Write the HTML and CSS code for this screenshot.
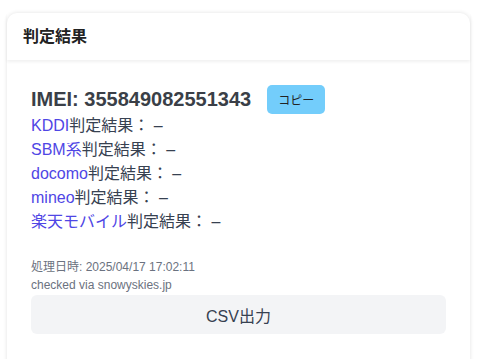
FILE: index.html
```html
<!DOCTYPE html>
<html lang="ja">
<head>
  <meta charset="UTF-8">
  <meta name="viewport" content="width=device-width, initial-scale=1.0">
  <title>判定結果</title>
  <link rel="stylesheet" href="styles.css">
</head>
<body>
  <div class="card">
    <div class="card-header">
      <h2>判定結果</h2>
    </div>

    <div class="card-body">
      <div class="imei-row">
        <span class="imei">IMEI: 355849082551343</span>
        <button class="copy-btn">コピー</button>
      </div>

      <ul class="results">
        <li><span class="carrier">KDDI</span>判定結果： –</li>
        <li><span class="carrier">SBM系</span>判定結果： –</li>
        <li><span class="carrier">docomo</span>判定結果： –</li>
        <li><span class="carrier">mineo</span>判定結果： –</li>
        <li><span class="carrier">楽天モバイル</span>判定結果： –</li>
      </ul>

      <p class="meta">処理日時: 2025/04/17 17:02:11</p>
      <p class="meta">checked via snowyskies.jp</p>

      <button class="csv-btn">CSV出力</button>
    </div>
  </div>
</body>
</html>
```

FILE: styles.css
```css
body {
  margin: 0;
  padding: 13px 7px 0;
  background-color: #fff;
  font-family: "Liberation Sans", Arial, "Noto Sans CJK JP", sans-serif;
  color: #374151;
}

.card {
  background-color: #fff;
  border-radius: 10px;
  box-shadow: 0 0 4px rgba(0, 0, 0, 0.12);
  height: 400px;
}

.card-header {
  height: 47px;
  box-sizing: border-box;
  display: flex;
  align-items: center;
  padding: 0 16px 3px;
  box-shadow: 0 2px 3px rgba(0, 0, 0, 0.06);
  position: relative;
}

h2 {
  margin: 0;
  font-size: 16px;
  font-weight: bold;
  color: #222;
}

.card-body {
  padding: 25px 24px 0;
}

.imei-row {
  display: flex;
  align-items: center;
  gap: 16px;
  height: 29px;
}

.imei {
  font-size: 20px;
  font-weight: bold;
  color: #3a3f47;
}

.copy-btn {
  background-color: #73cdfb;
  border: none;
  border-radius: 5px;
  height: 29px;
  padding: 0 11px;
  font-family: inherit;
  font-size: 12px;
  color: #222;
  cursor: pointer;
}

.results {
  list-style: none;
  margin: 0;
  padding: 0;
  font-size: 16px;
  line-height: 24px;
}

.carrier {
  color: #4f46e5;
}

.meta {
  margin: 0;
  font-size: 12px;
  line-height: 18px;
  color: #6b7280;
}

.results + .meta {
  margin-top: 24px;
}

.csv-btn {
  display: block;
  width: 100%;
  height: 39px;
  margin-top: 1px;
  background-color: #f3f4f6;
  border: none;
  border-radius: 6px;
  font-family: inherit;
  font-size: 16px;
  color: #374151;
  cursor: pointer;
}
```
